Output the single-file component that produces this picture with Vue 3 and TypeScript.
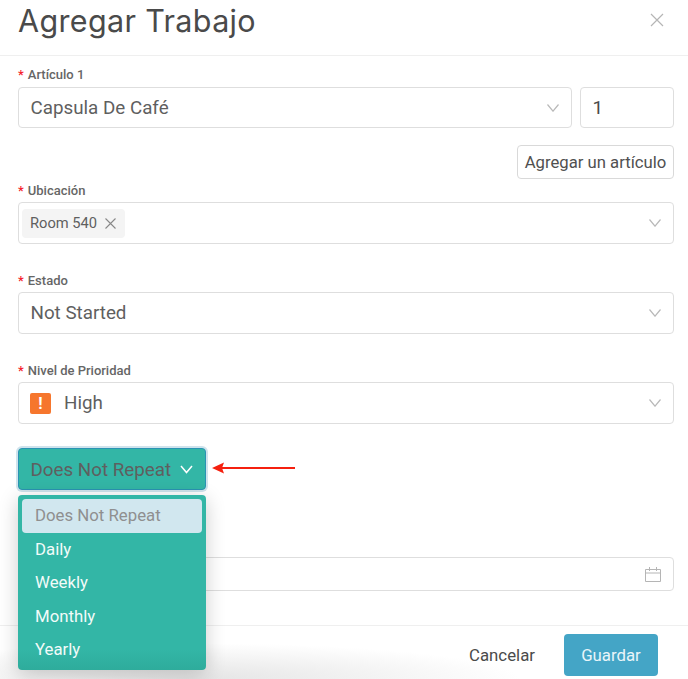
<script setup lang="ts">
const options: string[] = ['Daily', 'Weekly', 'Monthly', 'Yearly']
</script>

<template>
  <div class="modal">
    <header class="head">
      <h1>Agregar Trabajo</h1>
      <svg class="close" width="14" height="14" viewBox="0 0 14 14"><path d="M1 1l12 12M13 1L1 13" /></svg>
    </header>
    <main class="body">
      <label class="label first"><i>*</i>Artículo 1</label>
      <div class="row">
        <div class="field grow">
          <span>Capsula De Café</span>
          <svg class="chev" width="12" height="8" viewBox="0 0 12 8"><path d="M.5.5L6 7.200 11.500.5" /></svg>
        </div>
        <div class="field qty"><span>1</span></div>
      </div>
      <div class="add-row"><button class="add">Agregar un artículo</button></div>

      <label class="label loc"><i>*</i>Ubicación</label>
      <div class="field tagfield">
        <span class="tag">Room 540
          <svg width="11" height="11" viewBox="0 0 11 11"><path d="M.5.5l10 10M10.500.5l-10 10" /></svg>
        </span>
        <svg class="chev" width="12" height="8" viewBox="0 0 12 8"><path d="M.5.5L6 7.200 11.500.5" /></svg>
      </div>

      <label class="label next"><i>*</i>Estado</label>
      <div class="field">
        <span>Not Started</span>
        <svg class="chev" width="12" height="8" viewBox="0 0 12 8"><path d="M.5.5L6 7.200 11.500.5" /></svg>
      </div>

      <label class="label next"><i>*</i>Nivel de Prioridad</label>
      <div class="field">
        <span class="prio"><b>!</b>High</span>
        <svg class="chev" width="12" height="8" viewBox="0 0 12 8"><path d="M.5.5L6 7.200 11.500.5" /></svg>
      </div>

      <div class="repeat-wrap">
        <button class="repeat">
          <span>Does Not Repeat</span>
          <svg width="13" height="9" viewBox="0 0 13 9"><path d="M1 1l5.500 6.500L12 1" /></svg>
        </button>
        <svg class="arrow" width="85" height="12" viewBox="0 0 85 12">
          <path class="head-fill" d="M0 6L12 .5 10 6l2 5.500z" />
          <path class="shaft" d="M10 6H83" />
        </svg>
        <ul class="menu">
          <li class="active">Does Not Repeat</li>
          <li v-for="o in options" :key="o">{{ o }}</li>
        </ul>
      </div>

      <div class="field date">
        <svg class="cal" width="16" height="15" viewBox="0 0 16 15">
          <path d="M.5 2.500h15v12H.5zM.5 6h15M4.500 0v4M11.500 0v4" />
        </svg>
      </div>
    </main>
    <footer class="foot">
      <button class="cancel">Cancelar</button>
      <button class="save">Guardar</button>
    </footer>
  </div>
</template>

<style scoped>
.modal {
  width: 688px;
  height: 679px;
  overflow: hidden;
  background: #fff;
  color: #555;
  font-family: Roboto, "Liberation Sans", sans-serif;
  display: flex;
  flex-direction: column;
}
.head {
  height: 56px;
  box-sizing: border-box;
  border-bottom: 1px solid #efefef;
  padding: 0 24px 0 18px;
  display: flex;
  justify-content: space-between;
  align-items: flex-start;
}
h1 {
  margin: 0;
  font: 400 30.500px/41px Inter, sans-serif;
  letter-spacing: 0.35px;
  color: #4a4a4a;
}
.close {
  margin-top: 13px;
  fill: none;
  stroke: #b5b5b5;
  stroke-width: 1.2;
}
.body {
  flex: 1;
  padding: 0 14px 0 18px;
}
.label {
  display: block;
  font-size: 13px;
  line-height: 16px;
  font-weight: 500;
  color: #666;
}
.label i {
  color: #f5222d;
  font-style: normal;
  margin-right: 4px;
}
.label.first { margin-top: 11px; margin-bottom: 4px; }
.label.loc { margin-top: 4px; margin-bottom: 3px; }
.label.next { margin-top: 29px; margin-bottom: 3px; }
.row {
  display: flex;
  gap: 8px;
}
.row .field { height: 41px; }
.grow { flex: 1; }
.field {
  height: 42px;
  box-sizing: border-box;
  border: 1px solid #dedede;
  border-radius: 4px;
  background: #fff;
  padding: 0 12px 0 11.500px;
  font-size: 18.800px;
  color: #5f5f5f;
  display: flex;
  align-items: center;
  justify-content: space-between;
}
.chev {
  fill: none;
  stroke: #b9b9b9;
  stroke-width: 1.2;
  flex: none;
}
.qty {
  width: 94px;
  color: #4a4a4a;
}
.add-row {
  display: flex;
  justify-content: flex-end;
  margin-top: 17px;
}
.add {
  height: 34px;
  width: 157px;
  padding: 0;
  background: #fff;
  border: 1px solid #d9d9d9;
  border-radius: 4px;
  font: 400 16.700px Roboto, sans-serif;
  color: #505050;
}
.tagfield { padding-left: 3px; }
.tag {
  height: 29px;
  width: 103px;
  box-sizing: border-box;
  padding-left: 8px;
  background: #f4f4f4;
  border-radius: 4px;
  font-size: 14.700px;
  color: #5f5f5f;
  display: flex;
  align-items: center;
  gap: 8px;
}
.tag svg {
  fill: none;
  stroke: #888;
  stroke-width: 1.1;
}
.prio {
  display: flex;
  align-items: center;
  gap: 13px;
  margin-left: -0.500px;
}
.prio b {
  width: 21px;
  height: 21px;
  background: #f6762d;
  border-radius: 2px;
  color: #fff;
  font-size: 16px;
  line-height: 21px;
  text-align: center;
}
.repeat-wrap {
  position: relative;
  margin-top: 24px;
  height: 42px;
}
.repeat {
  width: 188px;
  height: 42px;
  box-sizing: border-box;
  padding: 1px 12px 0 11.500px;
  border: 1px solid #2a93b3;
  border-radius: 4px;
  background: #33b6a6;
  box-shadow: 0 0 0 2px #cfe3ec;
  color: #5f5f5f;
  font: 400 18.800px Roboto, sans-serif;
  display: flex;
  align-items: center;
  justify-content: space-between;
}
.repeat svg {
  fill: none;
  stroke: #fff;
  stroke-width: 1.5;
  flex: none;
}
.arrow {
  position: absolute;
  left: 194px;
  top: 14px;
}
.head-fill { fill: #f5200f; }
.shaft {
  stroke: #f5200f;
  stroke-width: 2;
  fill: none;
}
.menu {
  position: absolute;
  z-index: 2;
  left: 0;
  top: 47px;
  width: 188px;
  height: 175px;
  box-sizing: border-box;
  margin: 0;
  padding: 4px;
  list-style: none;
  background: linear-gradient(180deg, #33b6a6 88%, #2eac9c 100%);
  border-radius: 4px;
  box-shadow: 0 4px 20px rgba(0, 0, 0, 0.2);
}
.menu li {
  height: 33.500px;
  line-height: 33.500px;
  padding-left: 13px;
  font-size: 16.800px;
  color: #f2fbf9;
}
.menu li.active {
  background: #d1e7ef;
  color: #8f8f8f;
  border-radius: 4px;
}
.date {
  margin-top: 67px;
  height: 34px;
  justify-content: flex-end;
}
.cal {
  fill: none;
  stroke: #b5b5b5;
  stroke-width: 1;
}
.foot {
  height: 54px;
  box-sizing: border-box;
  border-top: 1px solid #efefef;
  padding: 8px 30px 3px 0;
  background: radial-gradient(ellipse 330px 36px at 190px 100%, #e4e4e4, rgba(255, 255, 255, 0));
  display: flex;
  justify-content: flex-end;
  align-items: stretch;
}
.cancel {
  width: 94px;
  margin-right: 15px;
  border: 0;
  background: transparent;
  font: 400 16.800px Roboto, sans-serif;
  color: #4a4a4a;
}
.save {
  width: 94px;
  border: 0;
  border-radius: 4px;
  background: #44a5c6;
  color: #e9f5f9;
  font: 400 16.800px Roboto, sans-serif;
}
</style>
